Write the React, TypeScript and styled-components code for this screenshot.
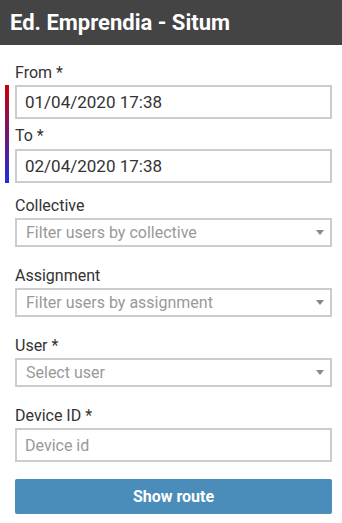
import styled, { createGlobalStyle } from "styled-components";

const GlobalStyle = createGlobalStyle`
  body {
    margin: 0;
    background: #fff;
    font-family: Roboto, "Liberation Sans", sans-serif;
  }
`;

const Panel = styled.div`
  width: 342px;
`;

const Header = styled.header`
  height: 45px;
  background: #444;
  display: flex;
  align-items: center;
  padding-left: 10px;
  color: #fff;
  font-size: 22px;
  font-weight: 700;
`;

const Form = styled.form`
  display: flex;
  flex-direction: column;
  padding: 19px 10px 0 15px;
`;

const Field = styled.div<{ gap?: number }>`
  display: flex;
  flex-direction: column;
  margin-bottom: ${(p) => p.gap ?? 20}px;
`;

const Label = styled.label`
  font-size: 16px;
  line-height: 18px;
  color: #333;
  margin-bottom: 3px;
`;

// barra de color a la izquierda del rango de fechas
const DateRange = styled.div`
  display: flex;
  flex-direction: column;
  margin-left: -10px;
  padding-left: 6px;
  border-left: 4px solid;
  border-image: linear-gradient(to bottom, #cc0000, #1a2fe0) 1;
`;

const TextInput = styled.input`
  box-sizing: border-box;
  height: 34px;
  border: 2px solid #ccc;
  padding: 0 8px;
  font-family: inherit;
  font-size: 17px;
  color: #333;
  outline: none;
  &::placeholder {
    color: #999;
    font-size: 16px;
  }
`;

const SelectBox = styled.div`
  box-sizing: border-box;
  height: 29px;
  border: 2px solid #ccc;
  display: flex;
  align-items: center;
  justify-content: space-between;
  padding: 0 6px 0 9px;
  font-size: 16px;
  color: #999;
`;

const Caret = styled.span`
  width: 0;
  height: 0;
  border-left: 4px solid transparent;
  border-right: 4px solid transparent;
  border-top: 5px solid #888;
`;

const Button = styled.button`
  height: 35px;
  border: 0;
  border-radius: 2px;
  background: #4a8dbb;
  color: #fff;
  font-family: inherit;
  font-size: 16px;
  font-weight: 700;
  margin-top: -3px;
`;

function Select({ placeholder }: { placeholder: string }) {
  return (
    <SelectBox>
      {placeholder}
      <Caret />
    </SelectBox>
  );
}

export default function App() {
  return (
    <Panel>
      <GlobalStyle />
      <Header>Ed. Emprendia - Situm</Header>
      <Form>
        <Label>From *</Label>
        <Field gap={14}>
          <DateRange>
            <TextInput defaultValue="01/04/2020 17:38" />
            <Label style={{ marginTop: 8, marginBottom: 4 }}>To *</Label>
            <TextInput defaultValue="02/04/2020 17:38" />
          </DateRange>
        </Field>
        <Field>
          <Label>Collective</Label>
          <Select placeholder="Filter users by collective" />
        </Field>
        <Field>
          <Label>Assignment</Label>
          <Select placeholder="Filter users by assignment" />
        </Field>
        <Field>
          <Label>User *</Label>
          <Select placeholder="Select user" />
        </Field>
        <Field>
          <Label>Device ID *</Label>
          <TextInput placeholder="Device id" />
        </Field>
        <Button type="button">Show route</Button>
      </Form>
    </Panel>
  );
}
